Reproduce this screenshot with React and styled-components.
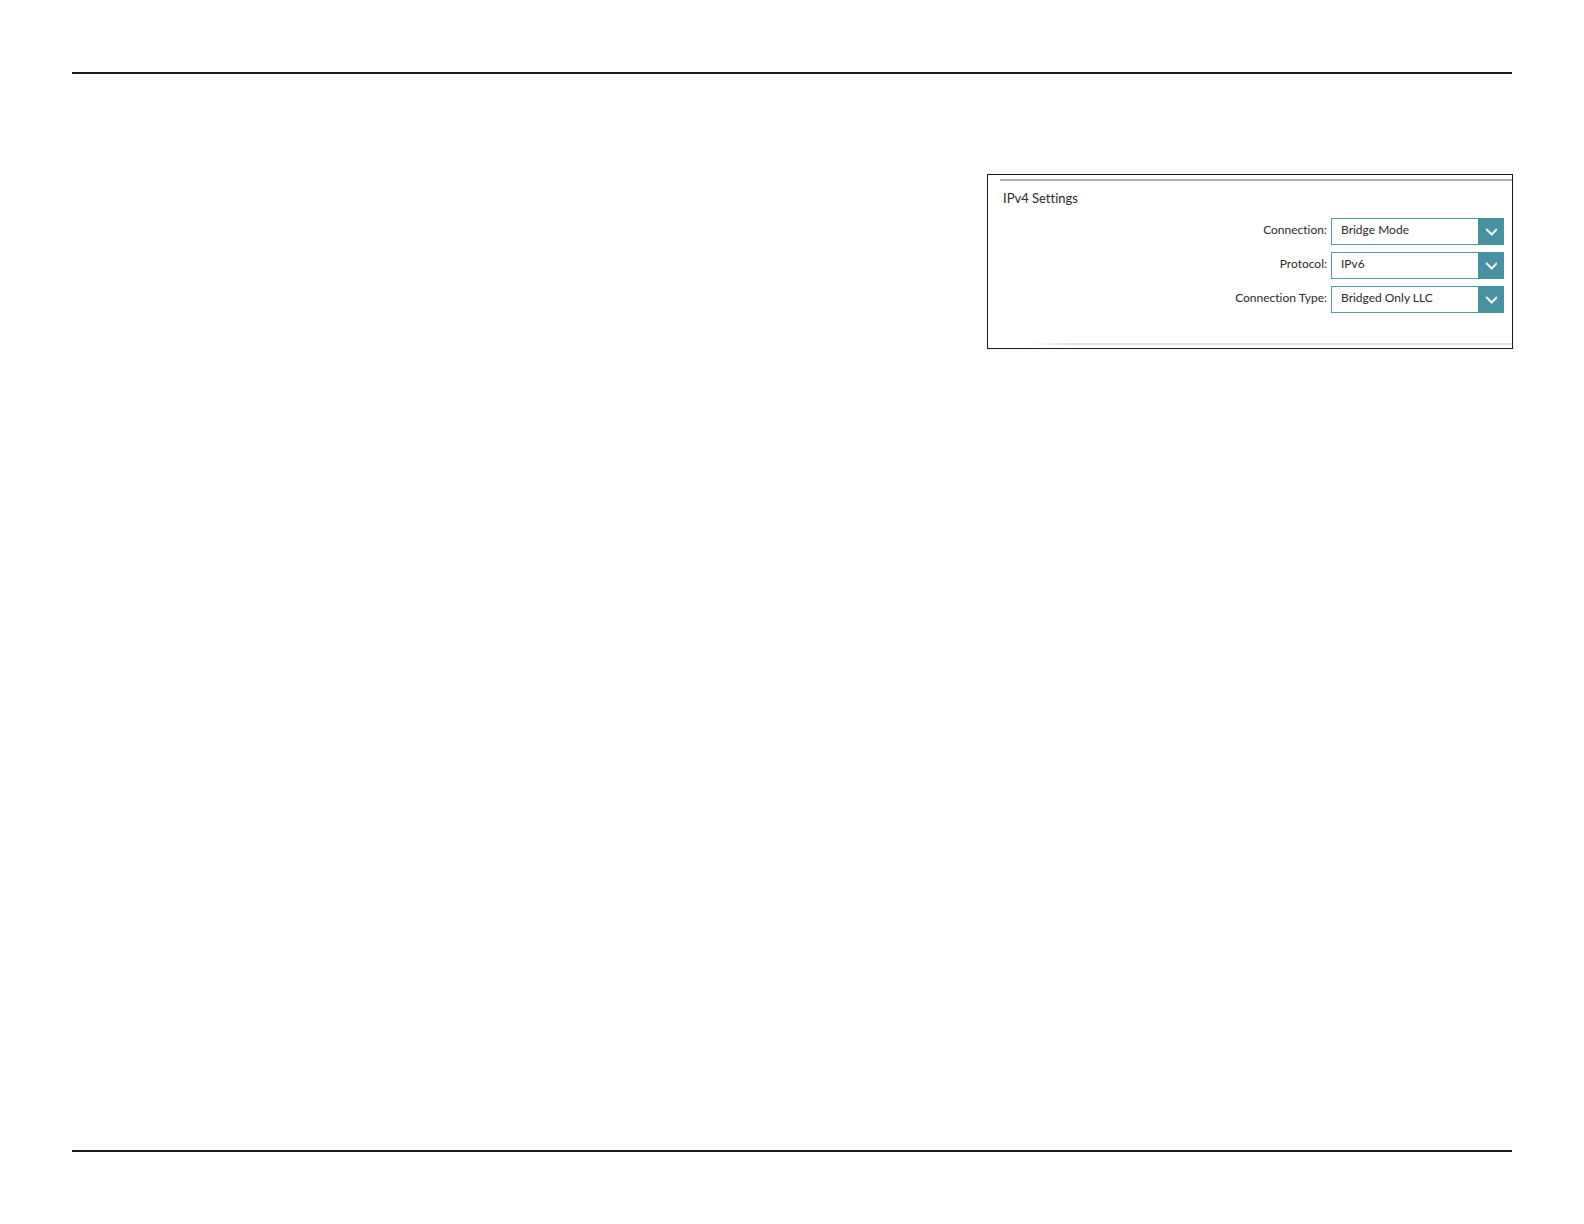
import React from "react";
import styled, { createGlobalStyle } from "styled-components";

const GlobalStyle = createGlobalStyle`
  * { box-sizing: border-box; }
  body {
    margin: 0;
    background: #fff;
    color: #2b2a2c;
    font-family: Lato, "Open Sans", sans-serif;
    font-variant-ligatures: none;
  }
`;

const Page = styled.div`
  display: flex;
  min-height: 100vh;
  padding: 72px;
`;

const Sheet = styled.main`
  flex: 1;
  display: flex;
  justify-content: flex-end;
  align-items: flex-start;
  padding-top: 100px;
  border-top: 2px solid #1d1b1e;
  border-bottom: 2px solid #1d1b1e;
`;

const Panel = styled.section`
  width: 100%;
  max-width: 526px;
  margin-right: -1px;
  padding: 4px 0 3px 12px;
  border: 1px solid #1d1b1e;
`;

const TopRule = styled.div`
  height: 2px;
  background: #b0b0b0;
`;

const BottomRule = styled.div`
  height: 2px;
  margin-top: 30px;
  background: linear-gradient(to right, transparent 28px, #e0e0e0 72px);
`;

const Title = styled.h2`
  margin: 8px 0 0 3px;
  font-size: 13px;
  line-height: 18px;
  font-weight: 400;
`;

const Fields = styled.form`
  display: grid;
  gap: 7px;
  margin-top: 11px;
  padding-right: 8px;
`;

const Field = styled.div`
  display: grid;
  grid-template-columns: 1fr 173px;
  column-gap: 4px;
  height: 27px;
`;

const Label = styled.label`
  padding-bottom: 4px;
  font-size: 12px;
  line-height: 23px;
  text-align: right;
`;

const SelectBox = styled.div`
  position: relative;
  display: flex;
`;

const Select = styled.select`
  appearance: none;
  width: 100%;
  height: 27px;
  margin: 0;
  padding: 0 30px 5px 9px;
  border: 1px solid #5298aa;
  border-radius: 0;
  background: #fff;
  color: inherit;
  font-family: inherit;
  font-size: 12px;
`;

const Arrow = styled.span`
  position: absolute;
  top: 0;
  right: 0;
  bottom: 0;
  display: flex;
  align-items: center;
  justify-content: center;
  width: 26px;
  background: #4792a2;
  pointer-events: none;
`;

const fields = [
  { id: "connection", label: "Connection:", value: "Bridge Mode" },
  { id: "protocol", label: "Protocol:", value: "IPv6" },
  { id: "connection-type", label: "Connection Type:", value: "Bridged Only LLC" },
];

function SelectField({ id, label, value }) {
  return (
    <Field>
      <Label htmlFor={id}>{label}</Label>
      <SelectBox>
        <Select id={id} defaultValue={value}>
          <option>{value}</option>
        </Select>
        <Arrow aria-hidden="true">
          <svg width="12" height="8" viewBox="0 0 12 8" fill="none">
            <path d="M1.2 1 L6.7 6.5 L12 1" stroke="#f2fafa" strokeWidth="2" />
          </svg>
        </Arrow>
      </SelectBox>
    </Field>
  );
}

export default function App() {
  return (
    <>
      <GlobalStyle />
      <Page>
        <Sheet>
          <Panel>
            <TopRule />
            <Title>IPv4 Settings</Title>
            <Fields>
              {fields.map((field) => (
                <SelectField key={field.id} {...field} />
              ))}
            </Fields>
            <BottomRule />
          </Panel>
        </Sheet>
      </Page>
    </>
  );
}
